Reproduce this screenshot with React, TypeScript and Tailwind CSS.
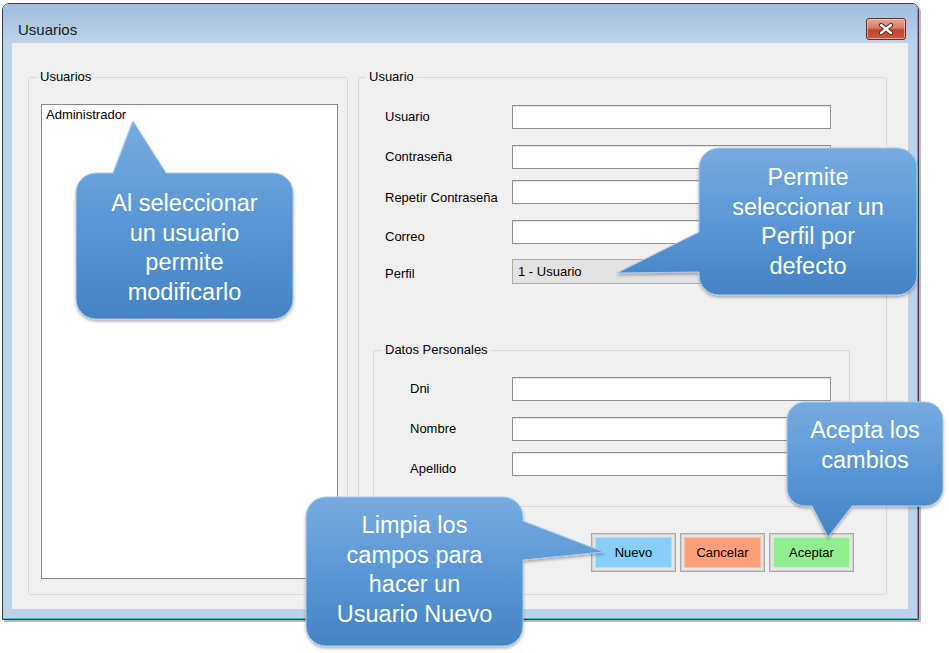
import React from "react";

type Pt = [number, number];
type Edge = "top" | "left" | "right" | "bottom";

function calloutPath(
  x: number,
  y: number,
  w: number,
  h: number,
  r: number,
  edge: Edge,
  a: number,
  b: number,
  tip: Pt
) {
  const [tx, ty] = tip;
  let d = `M ${x + r} ${y} `;
  if (edge === "top") d += `L ${a} ${y} L ${tx} ${ty} L ${b} ${y} `;
  d += `L ${x + w - r} ${y} A ${r} ${r} 0 0 1 ${x + w} ${y + r} `;
  if (edge === "right") d += `L ${x + w} ${a} L ${tx} ${ty} L ${x + w} ${b} `;
  d += `L ${x + w} ${y + h - r} A ${r} ${r} 0 0 1 ${x + w - r} ${y + h} `;
  if (edge === "bottom") d += `L ${b} ${y + h} L ${tx} ${ty} L ${a} ${y + h} `;
  d += `L ${x + r} ${y + h} A ${r} ${r} 0 0 1 ${x} ${y + h - r} `;
  if (edge === "left") d += `L ${x} ${b} L ${tx} ${ty} L ${x} ${a} `;
  d += `L ${x} ${y + r} A ${r} ${r} 0 0 1 ${x + r} ${y} Z`;
  return d;
}

const callouts = [
  { id: "c1", x: 76, y: 173, w: 217, h: 146, r: 20, edge: "top" as Edge, a: 113, b: 166, tip: [133, 121] as Pt, g1: 121, g2: 319 },
  { id: "c2", x: 699, y: 148, w: 218, h: 147, r: 20, edge: "left" as Edge, a: 232, b: 272, tip: [617, 273] as Pt, g1: 148, g2: 295 },
  { id: "c3", x: 787, y: 402, w: 156, h: 104, r: 18, edge: "bottom" as Edge, a: 812, b: 852, tip: [828, 537] as Pt, g1: 402, g2: 537 },
  { id: "c4", x: 306, y: 497, w: 217, h: 149, r: 20, edge: "right" as Edge, a: 521, b: 560, tip: [604, 552] as Pt, g1: 497, g2: 646 },
];

function TextBox() {
  return <div className="h-[24px] w-[319px] border border-[#8e8f8f] bg-white shadow-[inset_0_1px_0_#e3e3e3]" />;
}

function Btn({ label, fill }: { label: string; fill: string }) {
  return (
    <div className="flex h-[39px] w-[85px] border border-[#a9a9a9] bg-[#e4e4e4] p-[3px] shadow-[inset_0_0_0_1px_#d2d2d2]">
      <div className={fill}>
        <span className="text-[13px] leading-[16px] text-black">{label}</span>
      </div>
    </div>
  );
}

export default function App() {
  return (
    <div className="relative h-[653px] w-[949px] overflow-hidden bg-white font-['Liberation_Sans',Arial,sans-serif] text-black">
      {/* Window */}
      <div className="ml-[2px] mt-[3px] h-[617px] w-[917px] rounded-t-[7px] border border-[#3a3f45] shadow-[2px_2px_0_0_#b9b9b9]">
        <div className="flex h-full flex-col overflow-hidden rounded-t-[6px] border-b border-r border-[#48b2d0] bg-[#bed3eb]">
          {/* Title bar */}
          <div className="flex h-[39px] items-start justify-between bg-[linear-gradient(180deg,#a1bcdb_0%,#aec7e3_50%,#bcd3eb_100%)] pl-[15px] pr-[11px]">
            <span className="mt-[17px] text-[15px] leading-[17px] text-[#1b1b1b]">Usuarios</span>
            <div className="mt-[14px] flex h-[22px] w-[40px] items-center justify-center rounded-[3px] border border-[#6e2b22] bg-[linear-gradient(180deg,#e6a795_0%,#d67a66_45%,#c0432f_55%,#c95a40_100%)] shadow-[inset_0_0_0_1px_rgba(255,220,210,0.55)]">
              <svg width="16" height="12" viewBox="0 0 16 12">
                <path d="M3 2 L13 10 M13 2 L3 10" stroke="#5a2219" strokeWidth="4.2" strokeLinecap="round" />
                <path d="M3 2 L13 10 M13 2 L3 10" stroke="#ffffff" strokeWidth="2.4" strokeLinecap="round" />
              </svg>
            </div>
          </div>
          {/* Frame body */}
          <div className="flex-1 px-[9px] pb-[9px]">
            <div className="flex h-[566px] gap-[10px] bg-[#f0f0f0] pl-[16px] pt-[26px]">
              {/* Left group */}
              <fieldset className="m-0 h-[526px] w-[320px] min-w-0 rounded-[3px] border border-[#d9d9d9] p-0">
                <legend className="ml-[8px] px-[3px] text-[13px] leading-[16px]">Usuarios</legend>
                <div className="ml-[12px] mt-[19px] h-[475px] w-[297px] border border-[#82878f] bg-white pl-[4px] pt-[2px] text-[13px] leading-[16px]">
                  Administrador
                </div>
              </fieldset>
              {/* Right group */}
              <fieldset className="m-0 h-[526px] w-[529px] min-w-0 rounded-[3px] border border-[#d9d9d9] p-0">
                <legend className="ml-[7px] px-[3px] text-[13px] leading-[16px]">Usuario</legend>
                <div className="pl-[26px]">
                  <div className="mt-[20px] flex h-[24px] items-start">
                    <span className="mt-[4px] w-[127px] text-[13px] leading-[16px]">Usuario</span>
                    <TextBox />
                  </div>
                  <div className="mt-[16px] flex h-[24px] items-start">
                    <span className="mt-[4px] w-[127px] text-[13px] leading-[16px]">Contraseña</span>
                    <TextBox />
                  </div>
                  <div className="mt-[11px] flex h-[24px] items-start">
                    <span className="mt-[10px] w-[127px] text-[13px] leading-[16px]">Repetir Contraseña</span>
                    <TextBox />
                  </div>
                  <div className="mt-[16px] flex h-[24px] items-start">
                    <span className="mt-[9px] w-[127px] text-[13px] leading-[16px]">Correo</span>
                    <TextBox />
                  </div>
                  <div className="mt-[15px] flex h-[25px] items-start">
                    <span className="mt-[7px] w-[127px] text-[13px] leading-[16px]">Perfil</span>
                    <div className="flex h-[25px] w-[319px] items-center border border-[#acacac] bg-[#e3e3e3] pl-[5px]">
                      <span className="text-[13px] leading-[16px]">1 - Usuario</span>
                    </div>
                  </div>
                </div>
                {/* Datos personales */}
                <fieldset className="m-0 ml-[14px] mt-[58px] h-[165px] w-[477px] min-w-0 rounded-[3px] border border-[#d9d9d9] p-0">
                  <legend className="ml-[8px] px-[3px] text-[13px] leading-[16px]">Datos Personales</legend>
                  <div className="pl-[36px]">
                    <div className="mt-[19px] flex h-[24px] items-start">
                      <span className="mt-[4px] w-[102px] text-[13px] leading-[16px]">Dni</span>
                      <TextBox />
                    </div>
                    <div className="mt-[16px] flex h-[24px] items-start">
                      <span className="mt-[4px] w-[102px] text-[13px] leading-[16px]">Nombre</span>
                      <TextBox />
                    </div>
                    <div className="mt-[11px] flex h-[24px] items-start">
                      <span className="mt-[9px] w-[102px] text-[13px] leading-[16px]">Apellido</span>
                      <TextBox />
                    </div>
                  </div>
                </fieldset>
                <div className="ml-[232px] mt-[26px] flex gap-[4px]">
                  <Btn label="Nuevo" fill="flex flex-1 items-center justify-center border border-[#b4defc] bg-[#87cefa]" />
                  <Btn label="Cancelar" fill="flex flex-1 items-center justify-center border border-[#ffc0a6] bg-[#ffa07a]" />
                  <Btn label="Aceptar" fill="flex flex-1 items-center justify-center border border-[#bdf5bd] bg-[#90ee90]" />
                </div>
              </fieldset>
            </div>
          </div>
        </div>
      </div>

      {/* Callouts overlay */}
      <svg className="pointer-events-none absolute left-0 top-0" width="949" height="653" viewBox="0 0 949 653">
        <defs>
          {callouts.map((c) => (
            <linearGradient key={c.id} id={`g-${c.id}`} gradientUnits="userSpaceOnUse" x1="0" y1={c.g1} x2="0" y2={c.g2}>
              <stop offset="0" stopColor="#78abdf" />
              <stop offset="0.5" stopColor="#5a97d6" />
              <stop offset="1" stopColor="#4483c4" />
            </linearGradient>
          ))}
          <filter id="sh" x="-10%" y="-10%" width="120%" height="130%">
            <feDropShadow dx="0" dy="2" stdDeviation="1.5" floodColor="#000000" floodOpacity="0.3" />
          </filter>
        </defs>
        {callouts.map((c) => (
          <path
            key={c.id}
            d={calloutPath(c.x, c.y, c.w, c.h, c.r, c.edge, c.a, c.b, c.tip)}
            fill={`url(#g-${c.id})`}
            stroke="#a9cbee"
            strokeWidth="1"
            filter="url(#sh)"
          />
        ))}
      </svg>
      <div className="absolute left-[76px] top-[189px] w-[217px] text-center text-[23.5px] leading-[29.5px] text-white">
        Al seleccionar<br />un usuario<br />permite<br />modificarlo
      </div>
      <div className="absolute left-[699px] top-[163px] w-[218px] text-center text-[23.5px] leading-[29.5px] text-white">
        Permite<br />seleccionar un<br />Perfil por<br />defecto
      </div>
      <div className="absolute left-[787px] top-[416px] w-[156px] text-center text-[23.5px] leading-[29.5px] text-white">
        Acepta los<br />cambios
      </div>
      <div className="absolute left-[306px] top-[511px] w-[217px] text-center text-[23.5px] leading-[29.5px] text-white">
        Limpia los<br />campos para<br />hacer un<br />Usuario Nuevo
      </div>
    </div>
  );
}
